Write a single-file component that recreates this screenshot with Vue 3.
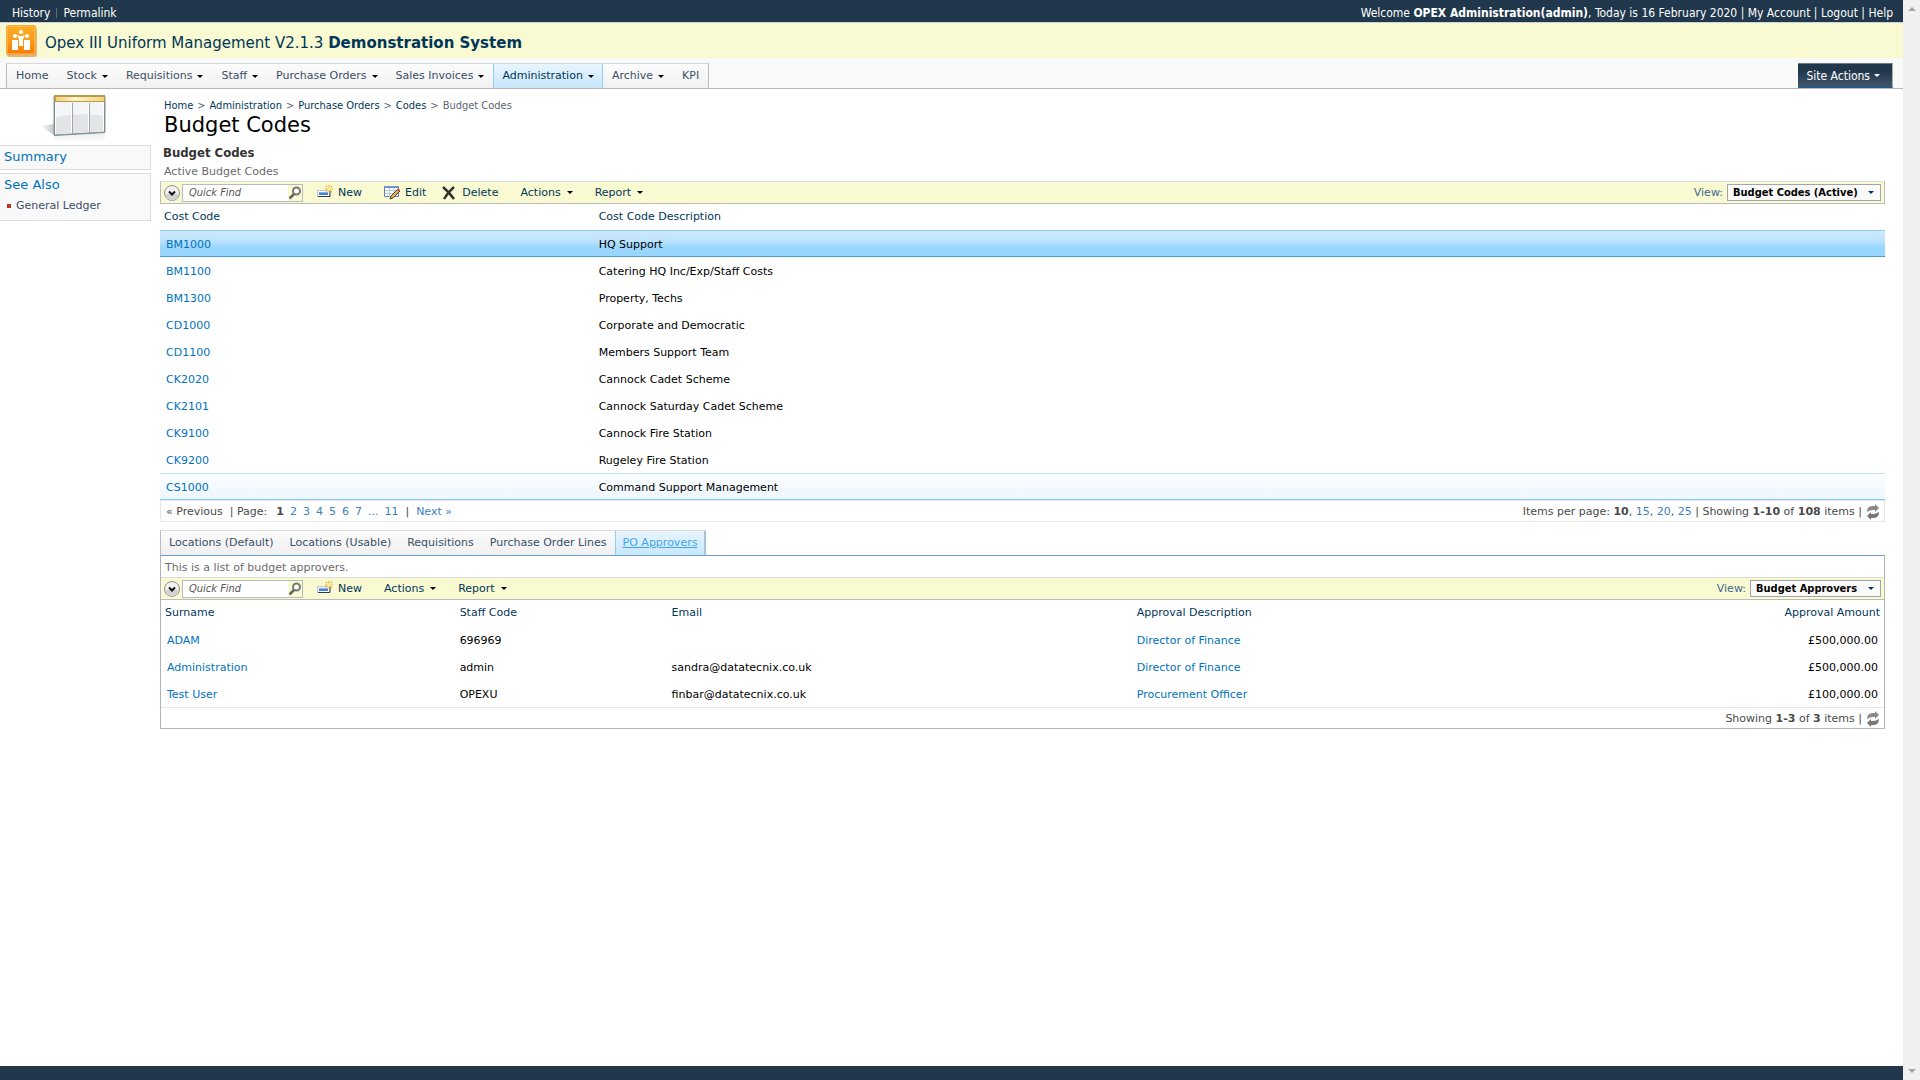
<template>
  <div class="window">
    <div class="page">
      <header>
        <div class="top-bar">
          <nav class="top-links">
            <a href="#">History</a>
            <span class="divider"></span>
            <a href="#">Permalink</a>
          </nav>
          <div class="membership">
            Welcome <b>OPEX Administration(admin)</b>, Today is 16 February 2020 |
            <a href="#">My Account</a> | <a href="#">Logout</a> | <a href="#">Help</a>
          </div>
        </div>
        <div class="brand">
          <svg class="logo" viewBox="0 0 32 32">
            <defs>
              <linearGradient id="logo-fill" x1="0" y1="0" x2="0" y2="1">
                <stop offset="0" stop-color="#fbb024" />
                <stop offset="0.5" stop-color="#fb9c1c" />
                <stop offset="1" stop-color="#f97a05" />
              </linearGradient>
            </defs>
            <rect x="1" y="2" width="30" height="30" rx="3" fill="#d8b98a" />
            <rect x="0" y="0" width="30" height="30" rx="3" fill="#f08a1d" />
            <rect x="1" y="1" width="28" height="28" rx="2" fill="url(#logo-fill)" stroke="#ffc768" />
            <g fill="#fff">
              <circle cx="9" cy="11" r="2" />
              <circle cx="15" cy="7" r="2" />
              <circle cx="21" cy="11" r="2" />
              <path d="M6 15h6v10H6zM18 15h6v10h-6zM11 10l3 1h2l3-1-2 4v7h-4v-7z" />
            </g>
          </svg>
          <div class="brand-title">Opex III Uniform Management V2.1.3 <b>Demonstration System</b></div>
        </div>
        <div class="menu-bar">
          <nav class="menu">
            <a
              v-for="item in menu"
              :key="item.label"
              href="#"
              class="menu-item"
              :class="{ active: item.active }"
            >
              {{ item.label }}<i v-if="item.children" class="arrow"></i>
            </a>
          </nav>
          <button class="site-actions">Site Actions<i class="arrow"></i></button>
        </div>
      </header>

      <div class="body">
        <aside class="side-bar">
          <svg class="page-icon" viewBox="0 0 68 50">
            <defs>
              <linearGradient id="head-fill" x1="0" y1="0" x2="1" y2="0">
                <stop offset="0" stop-color="#f0d27c" />
                <stop offset="0.4" stop-color="#fff3c8" />
                <stop offset="1" stop-color="#f3d277" />
              </linearGradient>
              <linearGradient id="shade-fill" x1="0" y1="0" x2="1" y2="0">
                <stop offset="0" stop-color="#fff" />
                <stop offset="1" stop-color="#c4c7c8" />
              </linearGradient>
              <linearGradient id="mirror-fill" x1="0" y1="0" x2="0" y2="1">
                <stop offset="0" stop-color="#dadddd" />
                <stop offset="1" stop-color="#fff" />
              </linearGradient>
            </defs>
            <path d="M0 31l14-2v11z" fill="url(#shade-fill)" />
            <path d="M14 41l51-3v9H14z" fill="url(#mirror-fill)" opacity="0.6" />
            <path d="M14 1h51v36l-51 3z" fill="#f4f5f6" stroke="#8a9b94" stroke-width="1" />
            <path d="M16 22q24-5 48-1v15l-48 3z" fill="#e3e4e7" />
            <path d="M14 0h51v7H14z" fill="#b59c52" />
            <path d="M16 2h48v4H16z" fill="url(#head-fill)" />
            <path d="M15.5 8v31M31.500 8v30M48.500 8v29M63.500 8v28" stroke="#fff" />
            <path d="M32.500 8v31M49.500 8v30" stroke="#9caaa5" />
            <path d="M14.500 7v33.500l50-3V7" fill="none" stroke="#7f9189" />
          </svg>
          <section class="task-box">
            <a href="#" class="task-title">Summary</a>
          </section>
          <section class="task-box see-also">
            <div class="task-title">See Also</div>
            <a href="#" class="task-link">General Ledger</a>
          </section>
        </aside>

        <main class="content">
          <nav class="breadcrumb">
            <template v-for="crumb in crumbs" :key="crumb">
              <a href="#">{{ crumb }}</a>
              <span>&gt;</span>
            </template>
            <span>Budget Codes</span>
          </nav>
          <h1>Budget Codes</h1>
          <h2>Budget Codes</h2>
          <p class="view-text">Active Budget Codes</p>

          <section v-for="grid in grids" :key="grid.id" :class="grid.id">
            <nav v-if="grid.id === 'detail'" class="tabs">
              <a
                v-for="tab in tabs"
                :key="tab"
                href="#"
                class="tab"
                :class="{ selected: tab === activeTab }"
                @click.prevent="activeTab = tab"
              >{{ tab }}</a>
            </nav>
            <div class="grid-panel">
              <p v-if="grid.description" class="panel-text">{{ grid.description }}</p>
              <div class="toolbar">
                <button class="chevron" aria-label="Show filters">
                  <svg viewBox="0 0 16 16">
                    <circle cx="8" cy="8" r="7.500" fill="#f1f1f1" stroke="#8e8e8e" />
                    <path d="M1.500 9a6.500 6.500 0 0 0 13 0z" fill="#d2d2d2" />
                    <path d="M5 6.500l3 3 3-3" fill="none" stroke="#111" stroke-width="2" />
                  </svg>
                </button>
                <div class="quick-find">
                  <input type="text" placeholder="Quick Find" aria-label="Quick Find" />
                  <button aria-label="Search">
                    <svg viewBox="0 0 14 14">
                      <circle cx="8.500" cy="5" r="3.500" fill="#fdfdf4" stroke="#777" stroke-width="2" />
                      <path d="M6 8l-4.500 4.500" stroke="#666" stroke-width="2.500" />
                    </svg>
                  </button>
                </div>
                <button v-for="action in grid.actions" :key="action" class="action" :class="action.toLowerCase()">
                  <svg v-if="action === 'New'" viewBox="0 0 16 16">
                    <path d="M0.500 5.500h12v6H.5z" fill="#fff" stroke="#b9c4d8" />
                    <path d="M1 11.500h12V6" fill="none" stroke="#2a3b5c" />
                    <path d="M2 7h9v3H2z" fill="#4a83d6" />
                    <path d="M2 7h9v1H2z" fill="#7fb0ef" />
                    <path d="M12 0v8M8 4h8M9 1l6 6M15 1L9 7" stroke="#e8b52c" stroke-width="1.500" stroke-dasharray="1.500 1" />
                    <circle cx="12" cy="4" r="1.500" fill="#fff6b0" />
                  </svg>
                  <svg v-else-if="action === 'Edit'" viewBox="0 0 16 16">
                    <path d="M0.500 1.500h14v10H.5z" fill="#fff" stroke="#6880b4" />
                    <path d="M1 1h13v2H1z" fill="#6f94dd" />
                    <path d="M1 5.500h13M1 8.500h13M5.500 3v9M10 3v9" stroke="#b6c6e6" />
                    <path d="M14 4l2 2-7 7-3 1 1-3z" fill="#e3b04b" stroke="#4c4438" />
                    <path d="M13 5l1-2 2 2-1 2z" fill="#c2543f" />
                  </svg>
                  <svg v-else-if="action === 'Delete'" viewBox="0 0 16 16">
                    <path d="M2 2q6 5 11 12M13 2Q7 7 3 14" fill="none" stroke="#333" stroke-width="2.500" />
                  </svg>
                  <span>{{ action }}</span>
                  <i v-if="action === 'Actions' || action === 'Report'" class="arrow"></i>
                </button>
                <label class="view-label" :for="grid.id + '-view'">View:</label>
                <div class="view-select">
                  <select :id="grid.id + '-view'">
                    <option>{{ grid.view }}</option>
                  </select>
                  <i class="arrow"></i>
                </div>
              </div>

              <table>
                <colgroup>
                  <col v-for="(column, i) in grid.columns" :key="i" :style="{ width: column.width }" />
                </colgroup>
                <thead>
                  <tr>
                    <th v-for="column in grid.columns" :key="column.label">{{ column.label }}</th>
                  </tr>
                </thead>
                <tbody>
                  <tr
                    v-for="row in grid.rows"
                    :key="row[0]"
                    :class="{ selected: row[0] === 'BM1000', hover: row[0] === 'CS1000' }"
                  >
                    <td v-for="(cell, i) in row" :key="i">
                      <a v-if="grid.columns[i].link" href="#">{{ cell }}</a>
                      <template v-else>{{ cell }}</template>
                    </td>
                  </tr>
                </tbody>
              </table>

              <div class="pager">
                <div v-if="grid.id === 'master'" class="pages">
                  <span>« Previous</span>
                  <span class="page-label">| Page:</span>
                  <b>1</b>
                  <a v-for="page in pages" :key="page" href="#">{{ page }}</a>
                  <span class="bar">|</span>
                  <a href="#">Next »</a>
                </div>
                <div class="totals">
                  <span v-if="grid.id === 'master'">
                    Items per page: <b>10</b>, <a href="#">15</a>, <a href="#">20</a>, <a href="#">25</a> |
                  </span>
                  Showing <b>{{ grid.range }}</b> of <b>{{ grid.total }}</b> items |
                </div>
                <button class="refresh" aria-label="Refresh">
                  <svg viewBox="0 0 14 16">
                    <path d="M1 8q0-6 6-6h2V0l4 4-4 4V6H7Q4 6 1 8z" fill="#8a8a8a" />
                    <path d="M13 8q0 6-6 6H5v2l-4-4 4-4v2h2q3 0 6-2z" fill="#777" />
                  </svg>
                </button>
              </div>
            </div>
          </section>
        </main>
      </div>
      <footer></footer>
    </div>
    <div class="scroll-track" aria-hidden="true">
      <i class="scroll-up"></i>
      <i class="scroll-down"></i>
    </div>
  </div>
</template>

<script setup>
import { ref } from 'vue'

const menu = [
  { label: 'Home' },
  { label: 'Stock', children: true },
  { label: 'Requisitions', children: true },
  { label: 'Staff', children: true },
  { label: 'Purchase Orders', children: true },
  { label: 'Sales Invoices', children: true },
  { label: 'Administration', children: true, active: true },
  { label: 'Archive', children: true },
  { label: 'KPI' }
]

const crumbs = ['Home', 'Administration', 'Purchase Orders', 'Codes']

const tabs = [
  'Locations (Default)',
  'Locations (Usable)',
  'Requisitions',
  'Purchase Order Lines',
  'PO Approvers'
]
const activeTab = ref('PO Approvers')

const pages = ['2', '3', '4', '5', '6', '7', '...', '11']

const grids = [
  {
    id: 'master',
    view: 'Budget Codes (Active)',
    actions: ['New', 'Edit', 'Delete', 'Actions', 'Report'],
    columns: [
      { label: 'Cost Code', width: '25.2%', link: true },
      { label: 'Cost Code Description', width: '74.8%' }
    ],
    rows: [
      ['BM1000', 'HQ Support'],
      ['BM1100', 'Catering HQ Inc/Exp/Staff Costs'],
      ['BM1300', 'Property, Techs'],
      ['CD1000', 'Corporate and Democratic'],
      ['CD1100', 'Members Support Team'],
      ['CK2020', 'Cannock Cadet Scheme'],
      ['CK2101', 'Cannock Saturday Cadet Scheme'],
      ['CK9100', 'Cannock Fire Station'],
      ['CK9200', 'Rugeley Fire Station'],
      ['CS1000', 'Command Support Management']
    ],
    range: '1-10',
    total: 108
  },
  {
    id: 'detail',
    description: 'This is a list of budget approvers.',
    view: 'Budget Approvers',
    actions: ['New', 'Actions', 'Report'],
    columns: [
      { label: 'Surname', width: '17.1%', link: true },
      { label: 'Staff Code', width: '12.3%' },
      { label: 'Email', width: '27%' },
      { label: 'Approval Description', width: '30%', link: true },
      { label: 'Approval Amount', width: '13.6%' }
    ],
    rows: [
      ['ADAM', '696969', '', 'Director of Finance', '£500,000.00'],
      ['Administration', 'admin', 'sandra@datatecnix.co.uk', 'Director of Finance', '£500,000.00'],
      ['Test User', 'OPEXU', 'finbar@datatecnix.co.uk', 'Procurement Officer', '£100,000.00']
    ],
    range: '1-3',
    total: 3
  }
]
</script>

<style>
body {
  margin: 0;
  background: #fff;
}
</style>

<style scoped>
.window {
  display: flex;
  min-height: 100vh;
  font-family: Verdana, 'DejaVu Sans', sans-serif;
  font-size: 11px;
  line-height: 14px;
  color: #000;
}

.window * {
  box-sizing: border-box;
}

.page {
  flex: 1;
  min-width: 0;
  display: flex;
  flex-direction: column;
}

a {
  color: #0072bc;
  text-decoration: none;
}

button {
  margin: 0;
  padding: 0;
  border: 0;
  background: none;
  font: inherit;
  color: inherit;
  cursor: pointer;
}

svg {
  display: block;
}

.arrow {
  display: inline-block;
  flex: none;
  border: 3px solid transparent;
  border-top-color: currentColor;
  border-bottom: 0;
}

/* header */
.top-bar {
  display: flex;
  justify-content: space-between;
  align-items: center;
  height: 23px;
  padding: 3px 10px 0 12px;
  background: #21374c;
  border-bottom: 1px solid #c6d5e3;
  color: #fff;
  font-family: Tahoma, 'DejaVu Sans Condensed', 'DejaVu Sans', sans-serif;
  font-size: 12px;
}

.top-bar a {
  color: #fff;
}

.top-links {
  display: flex;
  align-items: center;
  gap: 6px;
}

.divider {
  width: 1px;
  height: 10px;
  background: #5d6b7a;
}

.brand {
  display: flex;
  align-items: center;
  gap: 7px;
  height: 35px;
  padding-left: 6px;
  background: #f9f9d2;
}

.logo {
  width: 32px;
  height: 32px;
}

.brand-title {
  padding-top: 4px;
  font-size: 15px;
  line-height: 20px;
  color: #003759;
}

.menu-bar {
  display: flex;
  justify-content: space-between;
  align-items: flex-end;
  height: 31px;
  padding: 0 10px 0 6px;
  background: #f9f9f9;
  border-bottom: 1px solid #b8b8b8;
}

.menu {
  display: flex;
  height: 25px;
  border: 1px solid #d8d8d8;
  border-bottom: 0;
  border-left-color: #b8babd;
  border-right-color: #b8babd;
  background: linear-gradient(#fdfdfd, #f1f1f2);
}

.menu-item {
  display: flex;
  align-items: center;
  gap: 5px;
  padding: 0 8px;
  border: solid transparent;
  border-width: 0 1px;
  color: #3b4f65;
}

.menu-item .arrow {
  border-top-color: #000;
}

.menu-item.active {
  border-color: #91cdf2;
  background: linear-gradient(#e8f5fe, #c6e7fd);
  color: #003759;
}

.site-actions {
  display: flex;
  align-items: center;
  gap: 4px;
  height: 25px;
  padding: 0 12px 0 8px;
  border-top: 1px solid #6d7a86;
  border-right: 1px solid #a3abb2;
  border-bottom: 1px solid #105d9c;
  background: linear-gradient(#21374c 30%, #44576a);
  color: #fff;
  font-family: Tahoma, 'DejaVu Sans Condensed', 'DejaVu Sans', sans-serif;
  font-size: 12px;
}

/* side bar */
.body {
  flex: 1;
  display: flex;
}

.side-bar {
  width: 151px;
  flex: none;
}

.page-icon {
  width: 68px;
  height: 50px;
  margin: 6px 0 0 40px;
}

.task-box {
  padding: 3px 4px 4px;
  border: 1px solid #dcdcde;
  border-left: 0;
  background: #f9f9fa;
}

.see-also {
  margin-top: 3px;
  padding-bottom: 7px;
}

.task-title {
  display: block;
  font-size: 13px;
  line-height: 16px;
  color: #0072bc;
}

.task-link {
  display: flex;
  align-items: center;
  gap: 5px;
  margin-top: 6px;
  padding-left: 3px;
  color: #3b4f65;
}

.task-link::before {
  content: '';
  width: 4px;
  height: 4px;
  background: #c0321f;
}

/* content */
.content {
  flex: 1;
  min-width: 0;
  padding: 10px 18px 0 9px;
}

.breadcrumb {
  display: flex;
  gap: 4px;
  padding-left: 4px;
  color: #5c6475;
  font-family: Tahoma, 'DejaVu Sans Condensed', 'DejaVu Sans', sans-serif;
}

.breadcrumb a {
  color: #003759;
}

h1 {
  margin: 0;
  padding-left: 4px;
  font-size: 21px;
  font-weight: normal;
  line-height: 24px;
}

h2 {
  margin: 8px 0 0;
  padding-left: 3px;
  font-family: Tahoma, 'DejaVu Sans Condensed', 'DejaVu Sans', sans-serif;
  font-size: 13px;
  line-height: 16px;
  color: #333;
}

.view-text {
  margin: 4px 0 0;
  padding: 0 4px 2px;
  color: #6b6b6b;
}

.toolbar {
  display: flex;
  align-items: center;
  height: 23px;
  padding: 0 3px;
  border: 1px solid #bbb;
  border-top-color: #dcdcdc;
  background: #f9f9d2;
  color: #003759;
}

.chevron svg {
  width: 16px;
  height: 16px;
}

.quick-find {
  display: flex;
  align-items: center;
  width: 121px;
  height: 18px;
  margin: 0 14px 0 2px;
  border: 1px solid #b9babd;
  background: #fff;
}

.quick-find input {
  flex: 1;
  min-width: 0;
  padding: 0 0 0 6px;
  border: 0;
  outline: 0;
  background: none;
  font-family: Tahoma, 'DejaVu Sans Condensed', 'DejaVu Sans', sans-serif;
  font-size: 11px;
  font-style: italic;
}

.quick-find input::placeholder {
  color: #555;
  opacity: 1;
}

.quick-find button {
  padding: 1px 0;
  background: #f9f9d2;
}

.quick-find svg {
  width: 14px;
  height: 14px;
}

.action {
  display: flex;
  align-items: center;
  gap: 5px;
  margin-right: 22px;
}

.action svg {
  width: 16px;
  height: 16px;
}

.action .arrow {
  margin-left: 1px;
  border-top-color: #000;
}

.action.edit {
  margin-right: 15px;
}

.view-label {
  margin-left: auto;
  color: #3e6a8c;
}

.view-select {
  position: relative;
  margin-left: 4px;
}

.view-select select {
  appearance: none;
  display: block;
  height: 17px;
  padding: 0 22px 0 5px;
  border: 1px solid #a3a5a8;
  border-radius: 0;
  background: #fafafa;
  color: #000;
  font-family: Tahoma, 'DejaVu Sans Condensed', 'DejaVu Sans', sans-serif;
  font-size: 11px;
  font-weight: bold;
}

.view-select .arrow {
  position: absolute;
  top: 7px;
  right: 7px;
  pointer-events: none;
}

table {
  width: 100%;
  table-layout: fixed;
  border-collapse: separate;
  border-spacing: 0;
}

th {
  height: 26px;
  padding: 0 4px;
  font-weight: normal;
  text-align: left;
  color: #003759;
}

td {
  height: 27px;
  padding: 2px 4px 0;
  border: solid transparent;
  border-width: 1px 0;
}

td:first-child {
  padding-left: 6px;
}

.selected td {
  border-top-color: #91cdf2;
  border-bottom-color: #529bd0;
  background: linear-gradient(#cdeaff, #c0e4fd 35%, #9ad7fe 65%, #98d5fd);
}

.hover td {
  border-top-color: #c2e2f2;
  border-bottom-color: #91c8ee;
  background: linear-gradient(#fafdff, #eef7fe);
}

.detail th:last-child,
.detail td:last-child {
  text-align: right;
}

.detail td:last-child {
  padding-right: 6px;
}

.pager {
  display: flex;
  align-items: center;
  height: 22px;
  padding: 1px 4px 0 5px;
  border: 1px solid #e6e6e6;
  color: #4a4a4a;
}

.pager a {
  color: #4080bf;
}

.pages {
  display: flex;
  gap: 6px;
}

.page-label {
  margin: 0 3px 0 1px;
}

.pages .bar {
  margin: 0 1px;
}

.totals {
  margin-left: auto;
}

.refresh {
  margin-left: 4px;
}

.refresh svg {
  width: 14px;
  height: 16px;
}

/* detail view */
.tabs {
  display: inline-flex;
  height: 25px;
  margin-top: 8px;
  vertical-align: top;
  border: 1px solid #dcdcdc;
  border-bottom: 0;
  border-left-color: #b8babd;
  border-right-color: #b8babd;
  background: linear-gradient(#fbfbfb, #f0f0f1);
}

.tab {
  padding: 5px 7px;
  border: solid transparent;
  border-width: 0 1px;
  color: #3b4f65;
}

.tab.selected {
  border-color: #91cdf2;
  background: linear-gradient(#e8f5fe, #c6e7fd);
  color: #44a5ee;
  text-decoration: underline;
}

.detail .grid-panel {
  border: 1px solid #b3b4b9;
  border-top-color: #6f9fd0;
}

.panel-text {
  margin: 0;
  padding: 5px 4px 2px;
  color: #6b6b6b;
}

.detail .toolbar,
.detail .pager {
  border-right: 0;
  border-left: 0;
}

.detail .pager {
  height: 21px;
  border-bottom: 0;
}

footer {
  height: 14px;
  background: #21374c;
}

/* window scroll bar */
.scroll-track {
  display: flex;
  flex-direction: column;
  justify-content: space-between;
  align-items: center;
  width: 17px;
  padding: 7px 0;
  background: #f0f0f0;
}

.scroll-up,
.scroll-down {
  border: 4px solid transparent;
}

.scroll-up {
  border-top: 0;
  border-bottom-color: #a3a3a3;
}

.scroll-down {
  border-bottom: 0;
  border-top-color: #a3a3a3;
}
</style>
